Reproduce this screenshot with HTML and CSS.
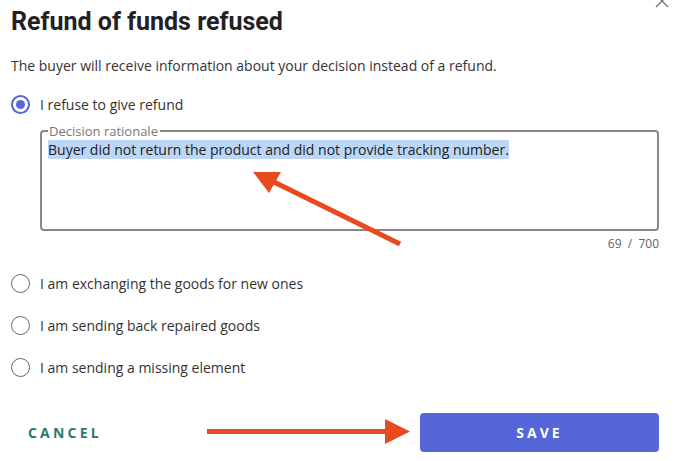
FILE: index.html
```html
<!DOCTYPE html>
<html lang="en">
<head>
<meta charset="utf-8">
<title>Refund of funds refused</title>
<link rel="stylesheet" href="styles.css">
</head>
<body>
<div class="dialog">
  <button class="close" aria-label="Close">
    <svg width="14" height="14" viewBox="0 0 14 14"><path d="M1 1 L13 13 M13 1 L1 13" stroke="#777" stroke-width="1.4" fill="none"/></svg>
  </button>
  <h1 class="title">Refund of funds refused</h1>
  <p class="intro">The buyer will receive information about your decision instead of a refund.</p>

  <div class="options">
    <label class="option">
      <span class="radio checked"></span>
      <span class="option-label">I refuse to give refund</span>
    </label>

    <div class="rationale">
      <fieldset class="field">
        <legend class="field-legend">Decision rationale</legend>
        <div class="field-text"><span class="selected">Buyer did not return the product and did not provide tracking number.</span></div>
      </fieldset>
      <div class="counter">69&nbsp; /&nbsp; 700</div>
    </div>

    <label class="option">
      <span class="radio"></span>
      <span class="option-label">I am exchanging the goods for new ones</span>
    </label>
    <label class="option">
      <span class="radio"></span>
      <span class="option-label">I am sending back repaired goods</span>
    </label>
    <label class="option">
      <span class="radio"></span>
      <span class="option-label">I am sending a missing element</span>
    </label>
  </div>

  <div class="actions">
    <button class="btn-cancel">CANCEL</button>
    <button class="btn-save">SAVE</button>
  </div>

  <svg class="annotations" width="674" height="461" viewBox="0 0 674 461">
    <line x1="400" y1="244" x2="272" y2="181" stroke="#e8491f" stroke-width="5"/>
    <polygon points="253,172 281,172 269,193" fill="#e8491f"/>
    <line x1="207" y1="431.5" x2="388" y2="431.5" stroke="#e8491f" stroke-width="5"/>
    <polygon points="385,419 385,444 410,431.5" fill="#e8491f"/>
  </svg>
</div>
</body>
</html>
```

FILE: styles.css
```css
* { box-sizing: border-box; }
html, body { margin: 0; padding: 0; background: #fff; }
body {
  width: 674px;
  height: 461px;
  overflow: hidden;
  font-family: "Open Sans", "Liberation Sans", sans-serif;
  color: #333;
}
.dialog {
  position: relative;
  width: 674px;
  height: 461px;
  padding: 7px 15px 0 11px;
}
.close {
  position: absolute;
  top: -6px;
  right: 5px;
  border: 0;
  background: none;
  padding: 0;
  width: 14px;
  height: 14px;
}
.close svg { display: block; }
.title {
  margin: 0;
  font-family: Roboto, "Liberation Sans", sans-serif;
  font-weight: 700;
  font-size: 25px;
  line-height: 30px;
  color: #222;
}
.intro {
  margin: 19px 0 0;
  font-size: 14px;
  line-height: 20px;
  color: #333;
}
.options {
  display: flex;
  flex-direction: column;
  margin-top: 17px;
}
.option {
  display: flex;
  align-items: center;
  gap: 10px;
  height: 22px;
  font-size: 14px;
  color: #333;
}
.option + .option { margin-top: 20px; }
.radio {
  width: 19px;
  height: 19px;
  border-radius: 50%;
  border: 1px solid #666;
  flex: none;
  display: flex;
  align-items: center;
  justify-content: center;
}
.radio.checked {
  border: 2px solid #5566d9;
}
.radio.checked::after {
  content: "";
  width: 9px;
  height: 9px;
  border-radius: 50%;
  background: #5566d9;
}
.rationale {
  margin: 9px 0 20px 29px;
}
.field {
  margin: 0;
  padding: 0 6px;
  height: 107px;
  border: 2px solid #888;
  border-radius: 4px;
}
.field-legend {
  padding: 0 2px 0 1px;
  margin-left: 0;
  font-size: 13px;
  line-height: 14px;
  color: #777;
}
.field-text {
  margin-top: 2px;
  font-size: 14px;
  line-height: 20px;
  color: #222;
}
.selected { background: #bcd6f8; }
.counter {
  text-align: right;
  font-size: 12px;
  line-height: 16px;
  color: #666;
  margin-top: 5px;
}
.actions {
  display: flex;
  justify-content: space-between;
  align-items: center;
  margin-top: 35px;
}
.btn-cancel {
  border: 0;
  background: none;
  padding: 0 0 0 17px;
  font-family: "Open Sans", "Liberation Sans", sans-serif;
  font-weight: 700;
  font-size: 14px;
  letter-spacing: 3.2px;
  color: #2e7a6a;
}
.btn-save {
  width: 239px;
  height: 39px;
  border: 0;
  border-radius: 4px;
  background: #5566d9;
  color: #fff;
  font-family: "Open Sans", "Liberation Sans", sans-serif;
  font-weight: 700;
  font-size: 14px;
  letter-spacing: 3px;
}
.annotations {
  position: absolute;
  left: 0;
  top: 0;
  pointer-events: none;
}
```
